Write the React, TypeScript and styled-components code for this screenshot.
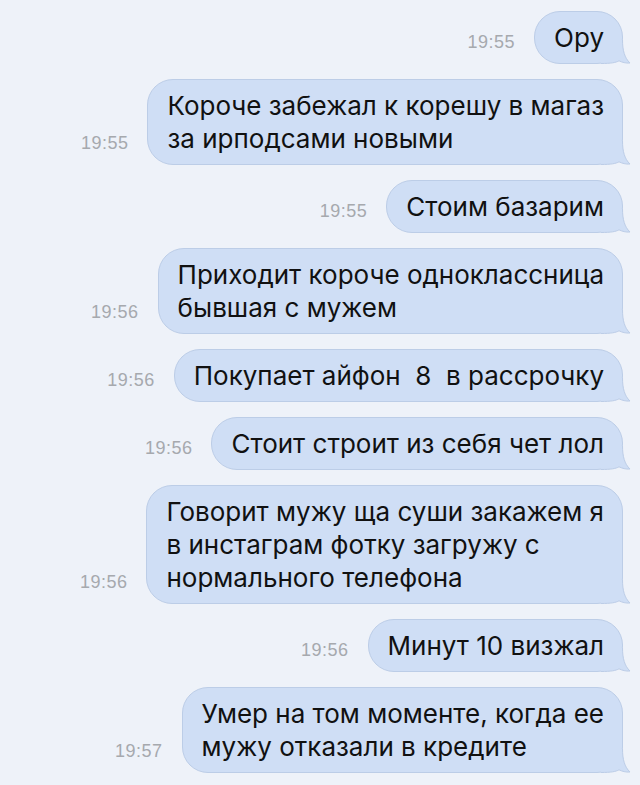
import React from "react";
import styled, { createGlobalStyle } from "styled-components";

const Global = createGlobalStyle`
  html, body { margin: 0; padding: 0; background: #eef2f9; }
  body { font-family: Inter, "Liberation Sans", Arial, sans-serif; }
`;

const Chat = styled.div`
  width: 640px;
  height: 785px;
  box-sizing: border-box;
  padding: 11px 17px 0 0;
  display: flex;
  flex-direction: column;
  gap: 15px;
  background: #eef2f9;
  overflow: hidden;
`;

const Row = styled.div`
  display: flex;
  justify-content: flex-end;
  align-items: flex-end;
  gap: 19px;
`;

const Time = styled.span`
  font-family: "Liberation Sans", Arial, sans-serif;
  font-size: 18px;
  line-height: 20px;
  color: #a6a9ae;
  margin-bottom: 12px;
  letter-spacing: 0.5px;
`;

const Bubble = styled.div`
  position: relative;
  background: #cfdef5;
  border: 1px solid #bccde7;
  border-radius: 26px;
  padding: 9px 18px 9px 19px;
  font-size: 26px;
  line-height: 33px;
  color: #111111;
  white-space: pre;
`;

const Text = styled.span`
  position: relative;
  z-index: 1;
`;

const Tail = styled.svg`
  position: absolute;
  right: -9px;
  bottom: -1px;
  width: 30px;
  height: 24px;
  overflow: visible;
  z-index: 0;
`;

const TailShape = () => (
  <Tail viewBox="0 0 30 24">
    <path
      d="M0 0 H21.5 C21.5 10 23.5 18 29 23 C25 23.4 21 22.3 18 20.8 C15 22.6 10 23.5 0 23.5 Z"
      fill="#cfdef5"
    />
    <path
      d="M21.5 0 C21.5 10 23.5 18 29 23 C25 23.4 21 22.3 18 20.8 C15 22.6 10 23.5 0 23.5"
      fill="none"
      stroke="#bccde7"
      strokeWidth="1"
    />
  </Tail>
);

const messages: { time: string; lines: string[] }[] = [
  { time: "19:55", lines: ["Ору"] },
  { time: "19:55", lines: ["Короче забежал к корешу в магаз", "за ирподсами новыми"] },
  { time: "19:55", lines: ["Стоим базарим"] },
  { time: "19:56", lines: ["Приходит короче одноклассница", "бывшая с мужем"] },
  { time: "19:56", lines: ["Покупает айфон  8  в рассрочку"] },
  { time: "19:56", lines: ["Стоит строит из себя чет лол"] },
  {
    time: "19:56",
    lines: ["Говорит мужу ща суши закажем я", "в инстаграм фотку загружу с", "нормального телефона"],
  },
  { time: "19:56", lines: ["Минут 10 визжал"] },
  { time: "19:57", lines: ["Умер на том моменте, когда ее", "мужу отказали в кредите"] },
];

export default function App() {
  return (
    <>
      <Global />
      <Chat>
        {messages.map((m, i) => (
          <Row key={i}>
            <Time>{m.time}</Time>
            <Bubble>
              <TailShape />
              <Text>{m.lines.join("\n")}</Text>
            </Bubble>
          </Row>
        ))}
      </Chat>
    </>
  );
}
